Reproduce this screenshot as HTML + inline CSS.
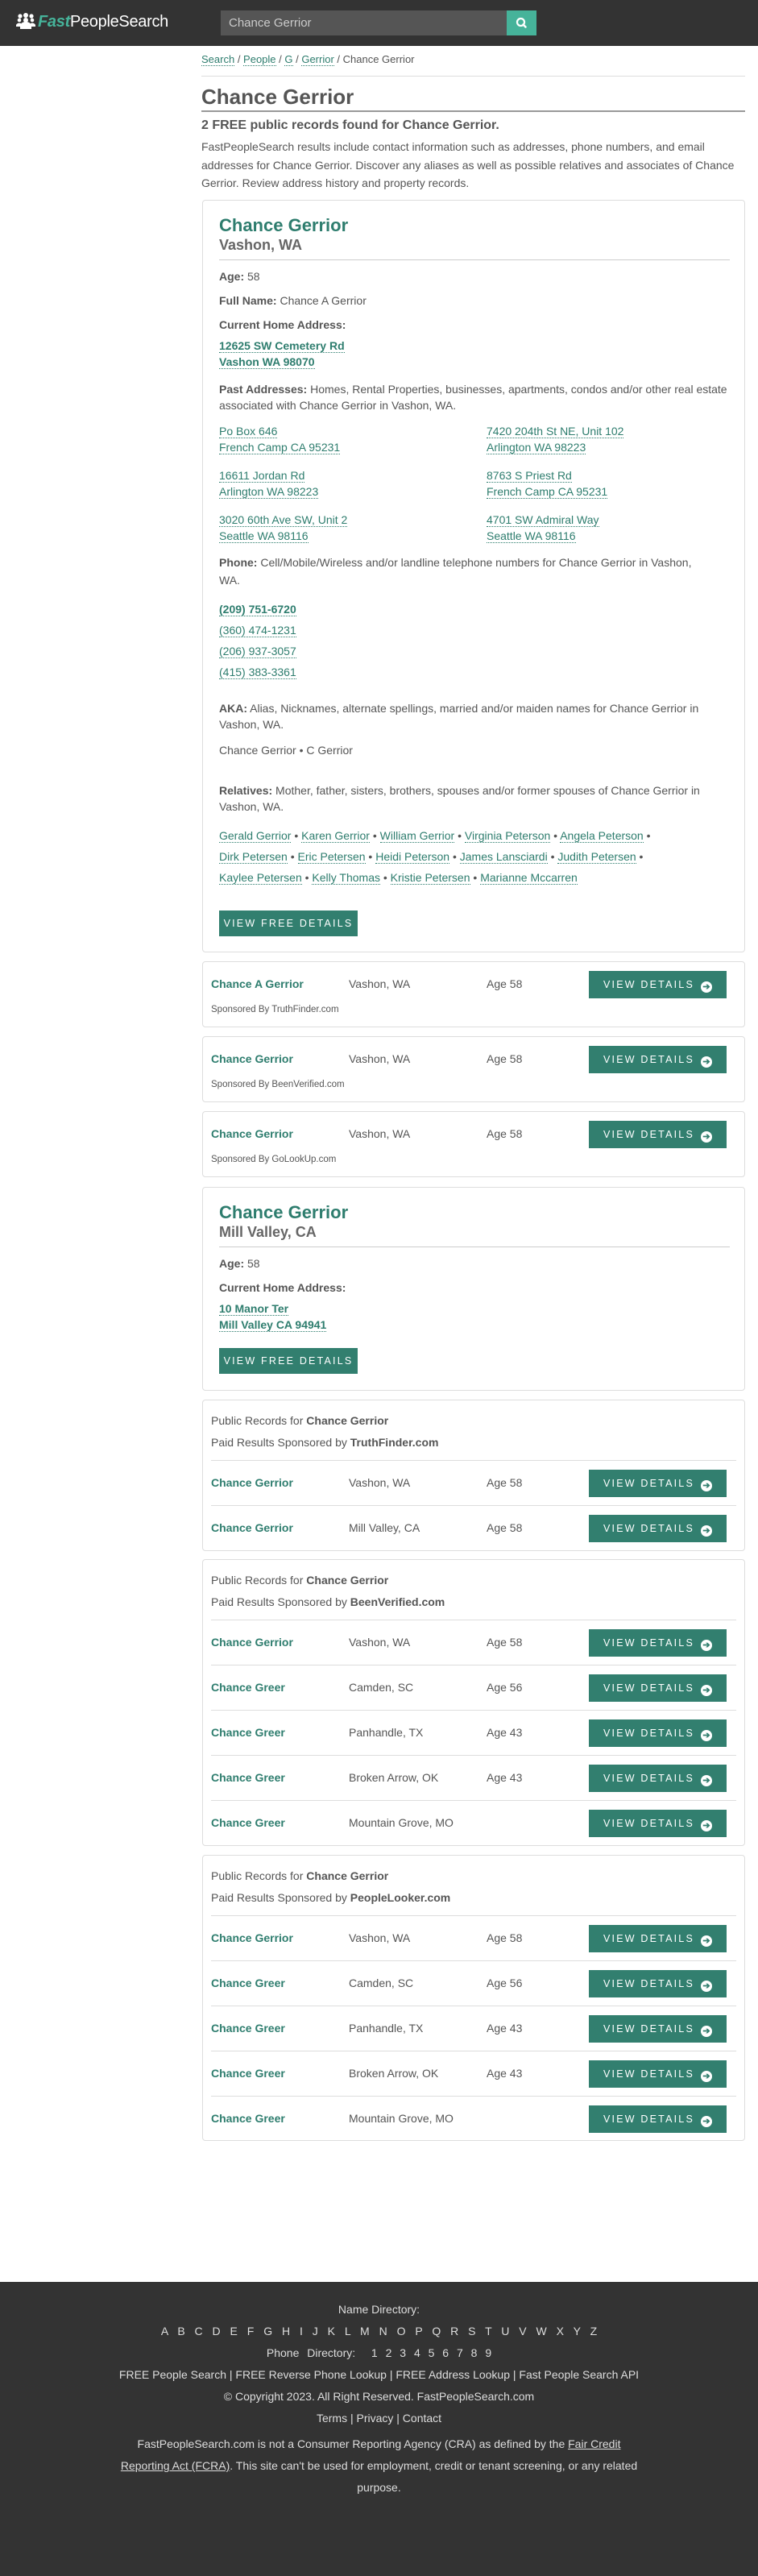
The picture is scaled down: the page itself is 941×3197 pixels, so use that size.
<!DOCTYPE html>
<html><head><meta charset="utf-8">
<style>
*{box-sizing:border-box;margin:0;padding:0}
body{width:941px;height:3197px;position:relative;background:#fff;font-family:"Liberation Sans",Arial,sans-serif;color:#555;font-size:14px;overflow:hidden}
a{color:#2e7d6e;text-decoration:none;border-bottom:1px dotted #2e7d6e}
.hdr{position:absolute;left:0;top:0;width:941px;height:57px;background:#333}
.logo{position:absolute;left:20px;top:16px;color:#fff;font-size:20px;letter-spacing:-0.3px}
.logo b{color:#46b39a;font-style:italic}
.sbox{position:absolute;left:274px;top:13px;width:355px;height:31px;background:#555;color:#ccc;font-size:15px;padding:7px 10px}
.sbtn{position:absolute;left:629px;top:13px;width:37px;height:31px;background:#46b39a}
.abs{position:absolute}
.card{position:absolute;left:251px;width:674px;border:1px solid #ddd;border-radius:4px;background:#fff}
.in{position:absolute;left:20px}
.gn{color:#2e7d6e;font-weight:bold}
.btn{position:absolute;background:#327f6f;color:#fff;font-size:12.5px;letter-spacing:2.2px;text-align:center}
.vd{left:479px;width:171px;height:34px;line-height:34px}
.vd i{display:inline-block;width:14px;height:14px;border-radius:50%;background:#fff;color:#327f6f;font-style:normal;font-size:11px;line-height:14px;letter-spacing:0;vertical-align:-2px;margin-left:8px;font-weight:bold}
.vf{left:20px;width:172px;height:32px;line-height:32px}
.row{position:absolute;left:10px;width:652px;height:56px;border-top:1px solid #ddd}
.row span{position:absolute;top:19px;font-size:14px}
.row .btn{top:11px;left:469px}
.foot{position:absolute;left:0;top:2832px;width:941px;height:365px;background:#333;color:#ddd;font-size:14px;text-align:center}
.foot div{position:absolute;left:0;width:941px}
</style></head><body>
<div class="hdr">
<div class="logo"><svg width="24" height="20" viewBox="0 0 24 20" style="vertical-align:-3px;margin-right:3px"><g fill="#fff"><circle cx="5" cy="4" r="2.6"/><circle cx="12" cy="3" r="3"/><circle cx="19" cy="4" r="2.6"/><circle cx="4" cy="9" r="2.3"/><circle cx="20" cy="9" r="2.3"/><circle cx="12" cy="9" r="3"/><path d="M5 20v-4a7 5 0 0 1 14 0v4z"/><path d="M0 16a4 3 0 0 1 6-3v4H0zM24 16a4 3 0 0 0-6-3v4h6z"/></g></svg><b>Fast</b>PeopleSearch</div>
<div class="sbox">Chance Gerrior</div>
<div class="sbtn"><svg width="37" height="31"><circle cx="17.5" cy="14.5" r="4.5" fill="none" stroke="#fff" stroke-width="2.2"/><path d="M20.5 17.5l3 3" stroke="#fff" stroke-width="2.5" stroke-linecap="round"/></svg></div>
</div>

<div class="abs" style="left:250px;top:66px;font-size:13px"><a href="#">Search</a> / <a href="#">People</a> / <a href="#">G</a> / <a href="#">Gerrior</a> / Chance Gerrior</div>
<div class="abs" style="left:250px;top:94px;width:675px;border-top:1px solid #ddd"></div>
<div class="abs" style="left:250px;top:105px;font-size:26px;font-weight:bold;color:#555">Chance Gerrior</div>
<div class="abs" style="left:250px;top:137px;width:675px;border-top:2px solid #999"></div>
<div class="abs" style="left:250px;top:147px;font-size:16px;font-weight:bold">2 FREE public records found for Chance Gerrior.</div>
<div class="abs" style="left:250px;top:171px;width:675px;line-height:22.7px">FastPeopleSearch results include contact information such as addresses, phone numbers, and email addresses for Chance Gerrior. Discover any aliases as well as possible relatives and associates of Chance Gerrior. Review address history and property records.</div>

<div class="card" style="top:248px;height:934px">
<div class="in gn" style="top:18px;font-size:22px">Chance Gerrior</div>
<div class="in" style="top:45px;font-size:18px;font-weight:bold;color:#666">Vashon, WA</div>
<div class="in" style="top:73px;width:634px;border-top:1px solid #ccc"></div>
<div class="in" style="top:86px"><b>Age:</b> 58</div>
<div class="in" style="top:116px"><b>Full Name:</b> Chance A Gerrior</div>
<div class="in" style="top:146px"><b>Current Home Address:</b></div>
<div class="in gn" style="top:170px;line-height:20px"><a href="#">12625 SW Cemetery Rd</a><br><a href="#">Vashon WA 98070</a></div>
<div class="in" style="top:224px;width:634px;line-height:20px"><b>Past Addresses:</b> Homes, Rental Properties, businesses, apartments, condos and/or other real estate associated with Chance Gerrior in Vashon, WA.</div>
<div class="in" style="top:276px;line-height:20px"><a href="#">Po Box 646</a><br><a href="#">French Camp CA 95231</a></div>
<div class="abs" style="left:352px;top:276px;line-height:20px"><a href="#">7420 204th St NE, Unit 102</a><br><a href="#">Arlington WA 98223</a></div>
<div class="in" style="top:331px;line-height:20px"><a href="#">16611 Jordan Rd</a><br><a href="#">Arlington WA 98223</a></div>
<div class="abs" style="left:352px;top:331px;line-height:20px"><a href="#">8763 S Priest Rd</a><br><a href="#">French Camp CA 95231</a></div>
<div class="in" style="top:386px;line-height:20px"><a href="#">3020 60th Ave SW, Unit 2</a><br><a href="#">Seattle WA 98116</a></div>
<div class="abs" style="left:352px;top:386px;line-height:20px"><a href="#">4701 SW Admiral Way</a><br><a href="#">Seattle WA 98116</a></div>
<div class="in" style="top:438px;width:634px;line-height:22px"><b>Phone:</b> Cell/Mobile/Wireless and/or landline telephone numbers for Chance Gerrior in Vashon,<br>WA.</div>
<div class="in" style="top:494px;line-height:26px"><a href="#" class="gn">(209) 751-6720</a><br><a href="#">(360) 474-1231</a><br><a href="#">(206) 937-3057</a><br><a href="#">(415) 383-3361</a></div>
<div class="in" style="top:620px;width:634px;line-height:20px"><b>AKA:</b> Alias, Nicknames, alternate spellings, married and/or maiden names for Chance Gerrior in Vashon, WA.</div>
<div class="in" style="top:674px">Chance Gerrior • C Gerrior</div>
<div class="in" style="top:722px;width:634px;line-height:20px"><b>Relatives:</b> Mother, father, sisters, brothers, spouses and/or former spouses of Chance Gerrior in Vashon, WA.</div>
<div class="in" style="top:775px;width:634px;line-height:26px"><a href="#">Gerald Gerrior</a> • <a href="#">Karen Gerrior</a> • <a href="#">William Gerrior</a> • <a href="#">Virginia Peterson</a> • <a href="#">Angela Peterson</a> •<br><a href="#">Dirk Petersen</a> • <a href="#">Eric Petersen</a> • <a href="#">Heidi Peterson</a> • <a href="#">James Lansciardi</a> • <a href="#">Judith Petersen</a> •<br><a href="#">Kaylee Petersen</a> • <a href="#">Kelly Thomas</a> • <a href="#">Kristie Petersen</a> • <a href="#">Marianne Mccarren</a></div>
<div class="btn vf" style="top:881px">VIEW FREE DETAILS</div>
</div>

<div class="card" style="top:1193px;height:82px">
<div class="row" style="border:0;top:0"><span class="gn" style="left:0">Chance A Gerrior</span><span style="left:171px">Vashon, WA</span><span style="left:342px">Age 58</span><div class="btn vd">VIEW DETAILS<i>➔</i></div></div>
<div class="abs" style="left:10px;top:53px;font-size:11.5px">Sponsored By TruthFinder.com</div></div>
<div class="card" style="top:1286px;height:82px">
<div class="row" style="border:0;top:0"><span class="gn" style="left:0">Chance Gerrior</span><span style="left:171px">Vashon, WA</span><span style="left:342px">Age 58</span><div class="btn vd">VIEW DETAILS<i>➔</i></div></div>
<div class="abs" style="left:10px;top:53px;font-size:11.5px">Sponsored By BeenVerified.com</div></div>
<div class="card" style="top:1379px;height:82px">
<div class="row" style="border:0;top:0"><span class="gn" style="left:0">Chance Gerrior</span><span style="left:171px">Vashon, WA</span><span style="left:342px">Age 58</span><div class="btn vd">VIEW DETAILS<i>➔</i></div></div>
<div class="abs" style="left:10px;top:53px;font-size:11.5px">Sponsored By GoLookUp.com</div></div>

<div class="card" style="top:1473px;height:253px">
<div class="in gn" style="top:18px;font-size:22px">Chance Gerrior</div>
<div class="in" style="top:45px;font-size:18px;font-weight:bold;color:#666">Mill Valley, CA</div>
<div class="in" style="top:73px;width:634px;border-top:1px solid #ccc"></div>
<div class="in" style="top:86px"><b>Age:</b> 58</div>
<div class="in" style="top:116px"><b>Current Home Address:</b></div>
<div class="in gn" style="top:140px;line-height:20px"><a href="#">10 Manor Ter</a><br><a href="#">Mill Valley CA 94941</a></div>
<div class="btn vf" style="top:199px">VIEW FREE DETAILS</div>
</div>

<div class="card" style="top:1737px;height:188px">
<div class="abs" style="left:10px;top:17px">Public Records for <b>Chance Gerrior</b></div>
<div class="abs" style="left:10px;top:44px">Paid Results Sponsored by <b>TruthFinder.com</b></div>
<div class="row" style="top:74px"><span class="gn" style="left:0">Chance Gerrior</span><span style="left:171px">Vashon, WA</span><span style="left:342px">Age 58</span><div class="btn vd">VIEW DETAILS<i>➔</i></div></div>
<div class="row" style="top:130px"><span class="gn" style="left:0">Chance Gerrior</span><span style="left:171px">Mill Valley, CA</span><span style="left:342px">Age 58</span><div class="btn vd">VIEW DETAILS<i>➔</i></div></div>
</div>

<div class="card" style="top:1935px;height:356px">
<div class="abs" style="left:10px;top:17px">Public Records for <b>Chance Gerrior</b></div>
<div class="abs" style="left:10px;top:44px">Paid Results Sponsored by <b>BeenVerified.com</b></div>
<div class="row" style="top:74px"><span class="gn" style="left:0">Chance Gerrior</span><span style="left:171px">Vashon, WA</span><span style="left:342px">Age 58</span><div class="btn vd">VIEW DETAILS<i>➔</i></div></div>
<div class="row" style="top:130px"><span class="gn" style="left:0">Chance Greer</span><span style="left:171px">Camden, SC</span><span style="left:342px">Age 56</span><div class="btn vd">VIEW DETAILS<i>➔</i></div></div>
<div class="row" style="top:186px"><span class="gn" style="left:0">Chance Greer</span><span style="left:171px">Panhandle, TX</span><span style="left:342px">Age 43</span><div class="btn vd">VIEW DETAILS<i>➔</i></div></div>
<div class="row" style="top:242px"><span class="gn" style="left:0">Chance Greer</span><span style="left:171px">Broken Arrow, OK</span><span style="left:342px">Age 43</span><div class="btn vd">VIEW DETAILS<i>➔</i></div></div>
<div class="row" style="top:298px"><span class="gn" style="left:0">Chance Greer</span><span style="left:171px">Mountain Grove, MO</span><div class="btn vd">VIEW DETAILS<i>➔</i></div></div>
</div>

<div class="card" style="top:2302px;height:355px">
<div class="abs" style="left:10px;top:17px">Public Records for <b>Chance Gerrior</b></div>
<div class="abs" style="left:10px;top:44px">Paid Results Sponsored by <b>PeopleLooker.com</b></div>
<div class="row" style="top:74px"><span class="gn" style="left:0">Chance Gerrior</span><span style="left:171px">Vashon, WA</span><span style="left:342px">Age 58</span><div class="btn vd">VIEW DETAILS<i>➔</i></div></div>
<div class="row" style="top:130px"><span class="gn" style="left:0">Chance Greer</span><span style="left:171px">Camden, SC</span><span style="left:342px">Age 56</span><div class="btn vd">VIEW DETAILS<i>➔</i></div></div>
<div class="row" style="top:186px"><span class="gn" style="left:0">Chance Greer</span><span style="left:171px">Panhandle, TX</span><span style="left:342px">Age 43</span><div class="btn vd">VIEW DETAILS<i>➔</i></div></div>
<div class="row" style="top:242px"><span class="gn" style="left:0">Chance Greer</span><span style="left:171px">Broken Arrow, OK</span><span style="left:342px">Age 43</span><div class="btn vd">VIEW DETAILS<i>➔</i></div></div>
<div class="row" style="top:298px"><span class="gn" style="left:0">Chance Greer</span><span style="left:171px">Mountain Grove, MO</span><div class="btn vd">VIEW DETAILS<i>➔</i></div></div>
</div>

<div class="foot">
<div style="top:26px">Name Directory:</div>
<div style="top:53px;word-spacing:8px">A B C D E F G H I J K L M N O P Q R S T U V W X Y Z</div>
<div style="top:80px;word-spacing:6px">Phone Directory: &nbsp;1 2 3 4 5 6 7 8 9</div>
<div style="top:107px">FREE People Search | FREE Reverse Phone Lookup | FREE Address Lookup | Fast People Search API</div>
<div style="top:134px">© Copyright 2023. All Right Reserved. FastPeopleSearch.com</div>
<div style="top:161px">Terms | Privacy | Contact</div>
<div style="top:188px;line-height:27px">FastPeopleSearch.com is not a Consumer Reporting Agency (CRA) as defined by the <u>Fair Credit</u><br><u>Reporting Act (FCRA)</u>. This site can't be used for employment, credit or tenant screening, or any related<br>purpose.</div>
</div>
</body></html>
